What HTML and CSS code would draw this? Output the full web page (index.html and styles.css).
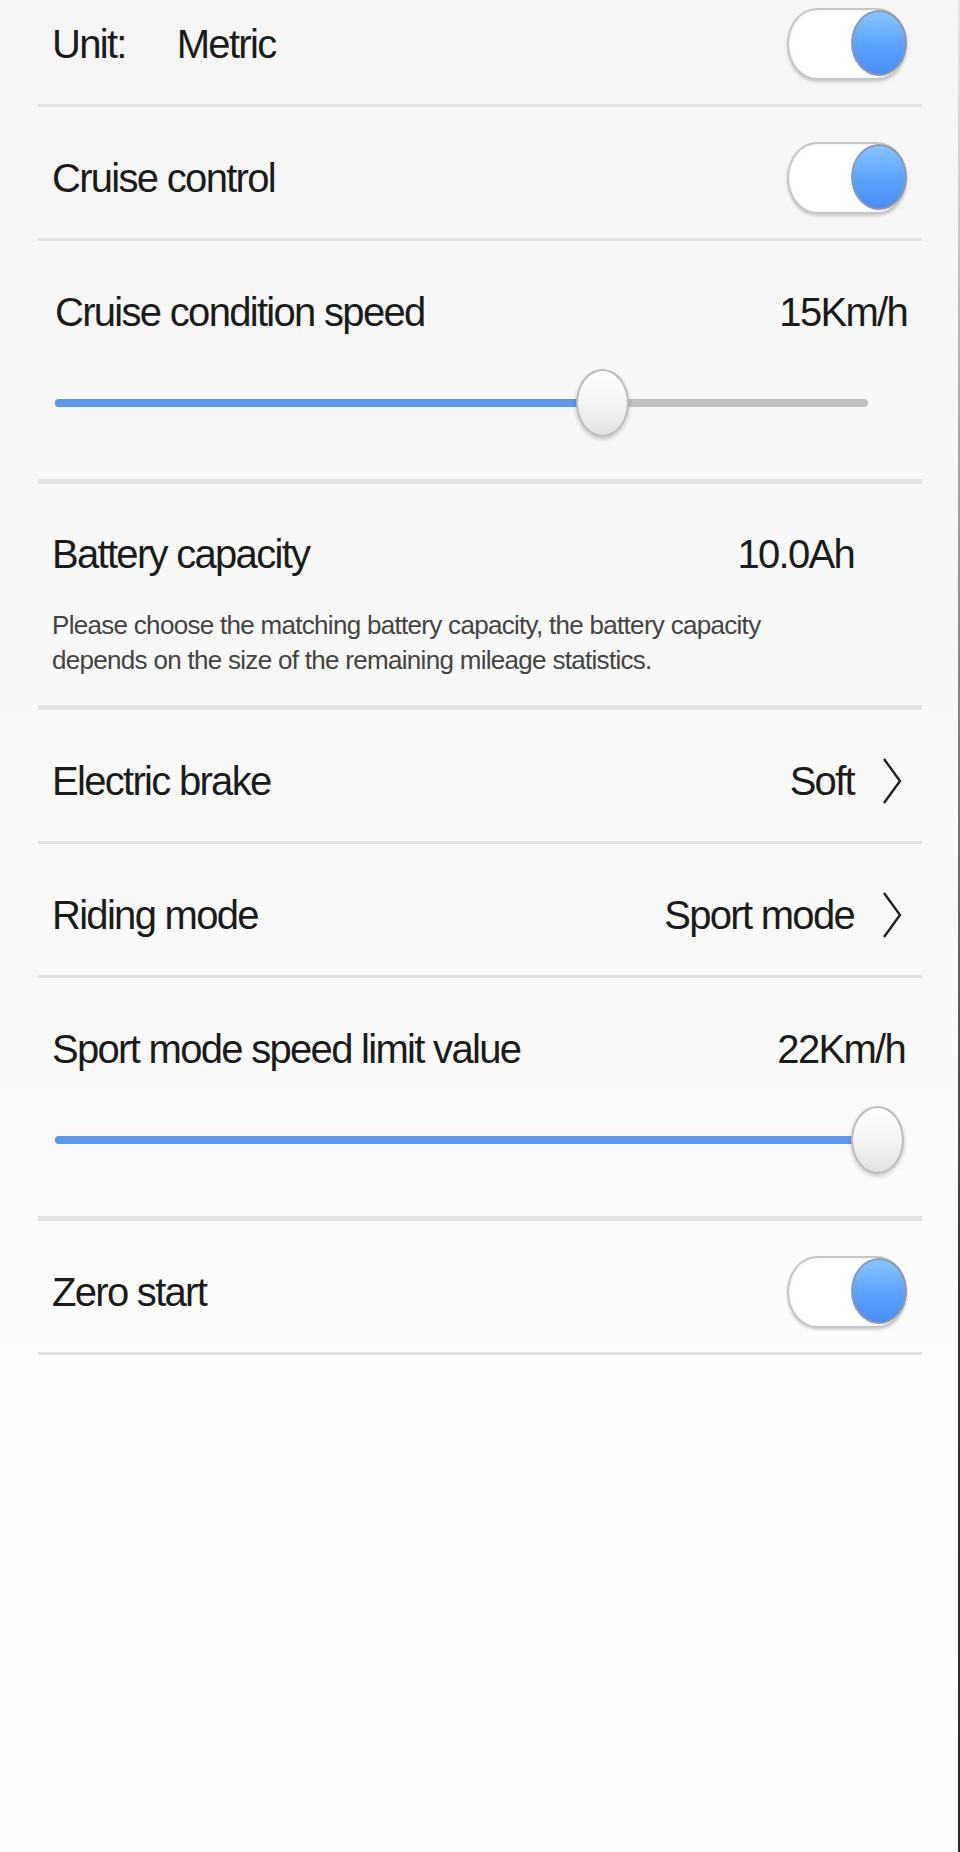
FILE: index.html
```html
<!DOCTYPE html>
<html>

<head>
    <title>Einstellungen</title>
    <meta charset="utf-8">
    <link rel="stylesheet" href="styles.css">
</head>

<body>
    <div id="seite">
        <div id="liste">
            <div class="zeile">
                <span class="titel">Unit:<span class="einheit">Metric</span></span>
                <div class="schalter an"><div class="knopf"></div></div>
            </div>

            <div class="zeile">
                <span class="titel">Cruise control</span>
                <div class="schalter an"><div class="knopf"></div></div>
            </div>

            <div class="zeile regler-zeile">
                <div class="kopf">
                    <span class="titel einzug">Cruise condition speed</span>
                    <span class="wert">15Km/h</span>
                </div>
                <div class="regler">
                    <div class="spur"><div class="fuellung" style="width: 547px"></div></div>
                    <div class="griff" style="left: 521px"></div>
                </div>
            </div>

            <div class="zeile akku-zeile">
                <div class="kopf">
                    <span class="titel">Battery capacity</span>
                    <span class="wert">10.0Ah<svg class="pfeil leer" viewBox="0 0 20 48"><polyline points="2,2 18,24 2,46"/></svg></span>
                </div>
                <p class="hinweis">Please choose the matching battery capacity, the battery capacity<br>depends on the size of the remaining mileage statistics.</p>
            </div>

            <div class="zeile">
                <span class="titel">Electric brake</span>
                <span class="wert">Soft<svg class="pfeil" viewBox="0 0 20 48"><polyline points="2,2 18,24 2,46"/></svg></span>
            </div>

            <div class="zeile">
                <span class="titel">Riding mode</span>
                <span class="wert">Sport mode<svg class="pfeil" viewBox="0 0 20 48"><polyline points="2,2 18,24 2,46"/></svg></span>
            </div>

            <div class="zeile regler-zeile">
                <div class="kopf">
                    <span class="titel">Sport mode speed limit value</span>
                    <span class="wert rechts">22Km/h</span>
                </div>
                <div class="regler">
                    <div class="spur"><div class="fuellung" style="width: 100%"></div></div>
                    <div class="griff" style="left: 796px"></div>
                </div>
            </div>

            <div class="zeile">
                <span class="titel">Zero start</span>
                <div class="schalter an"><div class="knopf"></div></div>
            </div>
        </div>
    </div>
</body>

</html>
```

FILE: styles.css
```css
* {
    box-sizing: border-box;
}

html,
body {
    margin: 0;
    padding: 0;
}

body {
    font-family: "Liberation Sans", Arial, Helvetica, sans-serif;
    color: #1b1b1b;
}

#seite {
    width: 960px;
    min-height: 1852px;
    overflow: hidden;
    background: linear-gradient(#f5f5f5, #fafafa 55%, #fefefe 83%, #fefefe);
    border-right: 2px solid;
    border-image: linear-gradient(#e6e6e6, #8a8a8a 35%, #333 70%, #2a2a2a) 1;
}

#liste {
    margin: -27px 36px 0 38px;
}

.zeile {
    display: flex;
    align-items: center;
    justify-content: space-between;
    height: 134px;
    padding: 10px 15px 0 14px;
    border-bottom: 3px solid #e3e3e3;
}

.titel,
.wert {
    font-size: 40px;
    line-height: 48px;
    letter-spacing: -1.7px;
    white-space: nowrap;
}

.einzug {
    margin-left: 3px;
}

.einheit {
    margin-left: 51px;
}

.wert {
    display: flex;
    align-items: center;
}

.rechts {
    margin-right: 2px;
}

.pfeil {
    width: 20px;
    height: 48px;
    margin-left: 28px;
    margin-right: 5px;
    fill: none;
    stroke: #222;
    stroke-width: 2.4;
}

.leer {
    visibility: hidden;
}

/* Schalter */
.schalter {
    position: relative;
    width: 120px;
    height: 72px;
    border: 2px solid #c6c6c6;
    border-radius: 30px / 36px;
    background: #fff;
    box-shadow: 0 2px 3px rgba(0, 0, 0, 0.18), inset 0 0 4px rgba(0, 0, 0, 0.08);
}

.knopf {
    position: absolute;
    right: -2px;
    top: 0;
    width: 56px;
    height: 66px;
    border-radius: 50%;
    border: 2px solid #8b9aae;
    background: linear-gradient(#86c4ff, #5aa2ff 55%, #4b8cf4);
}

/* Regler */
.regler-zeile,
.akku-zeile {
    display: block;
    height: auto;
    padding: 47px 15px 42px 14px;
    border-bottom-width: 5px;
}

.akku-zeile {
    padding-top: 46px;
    padding-bottom: 27px;
}

.kopf {
    display: flex;
    justify-content: space-between;
    align-items: center;
}

.regler {
    position: relative;
    width: 813px;
    height: 68px;
    margin: 33px 0 0 3px;
}

.spur {
    position: absolute;
    left: 0;
    right: 0;
    top: 30px;
    height: 8px;
    border-radius: 4px;
    background: #c1c1c1;
}

.fuellung {
    height: 8px;
    border-radius: 4px;
    background: #5b99ee;
}

.griff {
    position: absolute;
    top: 0;
    width: 53px;
    height: 68px;
    border-radius: 50%;
    border: 2px solid #bcbcbc;
    background: linear-gradient(#ffffff, #f4f4f4 50%, #e2e2e2);
    box-shadow: 0 2px 4px rgba(0, 0, 0, 0.22);
}

.hinweis {
    margin: 30px 0 0 0;
    font-size: 26px;
    line-height: 35px;
    letter-spacing: -0.7px;
    color: #444;
}
```
